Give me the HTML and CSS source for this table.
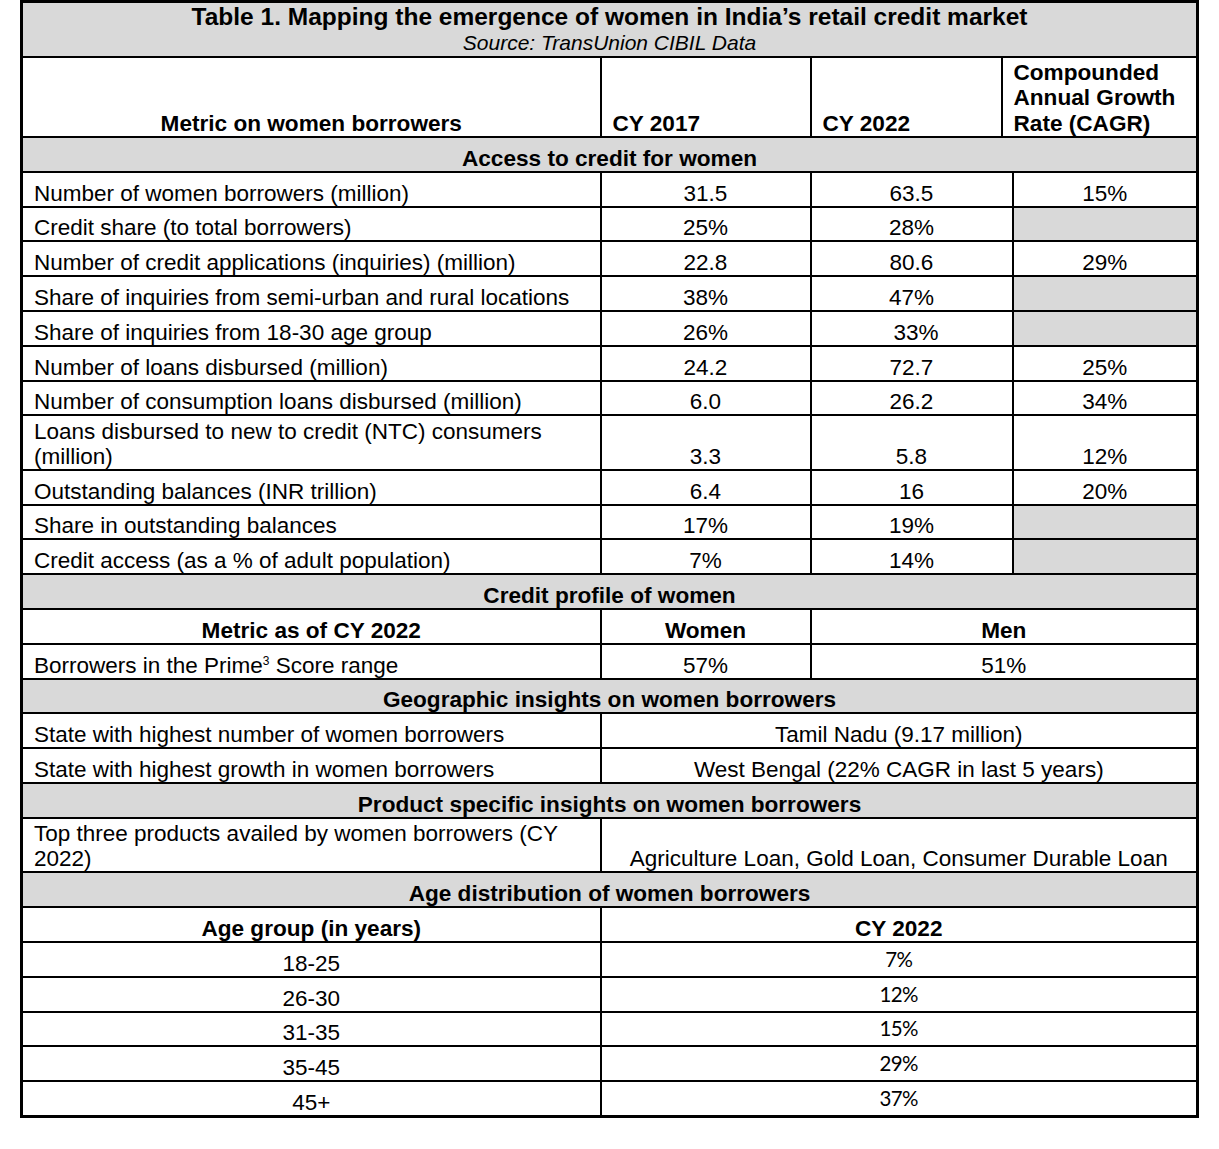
FILE: index.html
```html
<!DOCTYPE html>
<html lang="en">
<head>
    <meta charset="UTF-8">
    <title>Table 1. Mapping the emergence of women in India’s retail credit market</title>
    <link rel="stylesheet" href="styles.css">
</head>
<body>
    <table class="credit-table">
        <colgroup>
            <col class="col-metric">
            <col class="col-y1">
            <col class="col-y2">
            <col class="col-gap">
            <col class="col-cagr">
        </colgroup>

        <tr class="title-row">
            <td colspan="5">
                <div class="title">Table 1. Mapping the emergence of women in India’s retail credit market</div>
                <div class="source">Source: TransUnion CIBIL Data</div>
            </td>
        </tr>

        <tr class="head-row">
            <th class="center">Metric on women borrowers</th>
            <th>CY 2017</th>
            <th>CY 2022</th>
            <th colspan="2" class="cagr-head">Compounded Annual Growth Rate (CAGR)</th>
        </tr>

        <!-- Access to credit -->
        <tr class="section"><th colspan="5">Access to credit for women</th></tr>
        <tr>
            <td>Number of women borrowers (million)</td>
            <td class="num">31.5</td><td class="num" colspan="2">63.5</td><td class="num">15%</td>
        </tr>
        <tr>
            <td>Credit share (to total borrowers)</td>
            <td class="num">25%</td><td class="num" colspan="2">28%</td><td class="blank"></td>
        </tr>
        <tr>
            <td>Number of credit applications (inquiries) (million)</td>
            <td class="num">22.8</td><td class="num" colspan="2">80.6</td><td class="num">29%</td>
        </tr>
        <tr>
            <td>Share of inquiries from semi-urban and rural locations</td>
            <td class="num">38%</td><td class="num" colspan="2">47%</td><td class="blank"></td>
        </tr>
        <tr>
            <td>Share of inquiries from 18-30 age group</td>
            <td class="num">26%</td><td class="num shift" colspan="2">33%</td><td class="blank"></td>
        </tr>
        <tr>
            <td>Number of loans disbursed (million)</td>
            <td class="num">24.2</td><td class="num" colspan="2">72.7</td><td class="num">25%</td>
        </tr>
        <tr>
            <td>Number of consumption loans disbursed (million)</td>
            <td class="num">6.0</td><td class="num" colspan="2">26.2</td><td class="num">34%</td>
        </tr>
        <tr class="tall">
            <td>Loans disbursed to new to credit (NTC) consumers (million)</td>
            <td class="num">3.3</td><td class="num" colspan="2">5.8</td><td class="num">12%</td>
        </tr>
        <tr>
            <td>Outstanding balances (INR trillion)</td>
            <td class="num">6.4</td><td class="num" colspan="2">16</td><td class="num">20%</td>
        </tr>
        <tr>
            <td>Share in outstanding balances</td>
            <td class="num">17%</td><td class="num" colspan="2">19%</td><td class="blank"></td>
        </tr>
        <tr>
            <td>Credit access (as a % of adult population)</td>
            <td class="num">7%</td><td class="num" colspan="2">14%</td><td class="blank"></td>
        </tr>

        <!-- Credit profile -->
        <tr class="section"><th colspan="5">Credit profile of women</th></tr>
        <tr>
            <th class="center">Metric as of CY 2022</th>
            <th class="center">Women</th>
            <th class="center" colspan="3">Men</th>
        </tr>
        <tr>
            <td>Borrowers in the Prime<sup>3</sup> Score range</td>
            <td class="num">57%</td>
            <td class="num" colspan="3">51%</td>
        </tr>

        <!-- Geography -->
        <tr class="section"><th colspan="5">Geographic insights on women borrowers</th></tr>
        <tr>
            <td>State with highest number of women borrowers</td>
            <td class="num" colspan="4">Tamil Nadu (9.17 million)</td>
        </tr>
        <tr>
            <td>State with highest growth in women borrowers</td>
            <td class="num" colspan="4">West Bengal (22% CAGR in last 5 years)</td>
        </tr>

        <!-- Products -->
        <tr class="section"><th colspan="5">Product specific insights on women borrowers</th></tr>
        <tr class="tall">
            <td>Top three products availed by women borrowers (CY 2022)</td>
            <td class="num" colspan="4">Agriculture Loan, Gold Loan, Consumer Durable Loan</td>
        </tr>

        <!-- Age -->
        <tr class="section"><th colspan="5">Age distribution of women borrowers</th></tr>
        <tr>
            <th class="center">Age group (in years)</th>
            <th class="center" colspan="4">CY 2022</th>
        </tr>
        <tr><td class="num">18-25</td><td class="share" colspan="4">7%</td></tr>
        <tr><td class="num">26-30</td><td class="share" colspan="4">12%</td></tr>
        <tr><td class="num">31-35</td><td class="share" colspan="4">15%</td></tr>
        <tr><td class="num">35-45</td><td class="share" colspan="4">29%</td></tr>
        <tr><td class="num">45+</td><td class="share" colspan="4">37%</td></tr>
    </table>
</body>
</html>
```

FILE: styles.css
```css
body {
    margin: 0;
    padding: 0 0 0 20px;
    font-family: "Liberation Sans", Arial, sans-serif;
    color: #000;
    background: #fff;
}

.credit-table {
    border-collapse: collapse;
    table-layout: fixed;
    width: 1176px;
    border: 3px solid #000;
    font-size: 22.5px;
    line-height: 25px;
}

.col-metric { width: 579px; }
.col-y1 { width: 210px; }
.col-y2 { width: 191px; }
.col-gap { width: 11px; }
.col-cagr { width: 185px; }

.credit-table td,
.credit-table th {
    border: 2px solid #000;
    height: 32.8px;
    padding: 0 11px;
    vertical-align: bottom;
    text-align: left;
    font-weight: normal;
}

.credit-table th {
    font-weight: bold;
    font-size: 22.6px;
}

.credit-table .center,
.credit-table .num,
.credit-table .share {
    text-align: center;
}

.credit-table .shift {
    padding-left: 20px;
}

.credit-table .blank {
    background: #d9d9d9;
}

.credit-table .share {
    font-family: Lato, "Open Sans", sans-serif;
    font-size: 20.5px;
    letter-spacing: -0.6px;
    vertical-align: middle;
}

.credit-table .section th {
    background: #d9d9d9;
    text-align: center;
}

.credit-table .tall td {
    height: 52.5px;
}

.title-row td {
    background: #d9d9d9;
    text-align: center;
    vertical-align: top;
    height: 53px;
    padding-top: 0;
}

.title {
    font-weight: bold;
    font-size: 24.5px;
    line-height: 27px;
}

.source {
    font-style: italic;
    font-size: 21px;
    line-height: 26px;
}

.head-row th {
    height: 78px;
    line-height: 25.5px;
}

.cagr-head {
    padding-left: 10px;
}

sup {
    font-size: 12px;
    line-height: 0;
    vertical-align: 8px;
}
```
